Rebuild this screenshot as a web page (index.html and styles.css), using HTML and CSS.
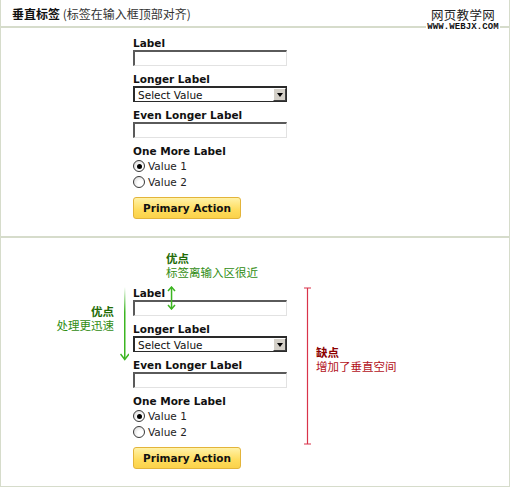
FILE: index.html
```html
<!DOCTYPE html>
<html lang="zh-CN">
<head>
  <meta charset="UTF-8">
  <title>垂直标签</title>
  <link rel="stylesheet" href="styles.css">
</head>
<body>

  <div class="panel">
    <div class="header">
      <strong>垂直标签</strong> (标签在输入框顶部对齐)
      <div class="watermark">
        <span class="wm-cn">网页教学网</span>
        <span class="wm-url">WWW.WEBJX.COM</span>
      </div>
    </div>

    <!-- plain form -->
    <div class="section first">
      <form class="form">
        <div class="field">
          <label class="caption">Label</label>
          <input type="text" class="text">
        </div>
        <div class="field">
          <label class="caption">Longer Label</label>
          <div class="select-wrap">
            <select><option>Select Value</option></select>
            <span class="select-arrow"></span>
          </div>
        </div>
        <div class="field">
          <label class="caption">Even Longer Label</label>
          <input type="text" class="text">
        </div>
        <div class="field">
          <span class="caption">One More Label</span>
          <label class="radio"><input type="radio" name="r1" checked> Value 1</label>
          <label class="radio"><input type="radio" name="r1"> Value 2</label>
        </div>
        <button type="button" class="btn">Primary Action</button>
      </form>
    </div>

    <!-- annotated form -->
    <div class="section second">
      <div class="note good top-note">
        <b>优点</b>
        <span>标签离输入区很近</span>
      </div>

      <div class="diagram">
        <div class="note good side-note">
          <b>优点</b>
          <span>处理更迅速</span>
        </div>

        <svg class="speed-arrow" width="9" height="74" viewBox="0 0 9 74">
          <defs>
            <linearGradient id="fade" x1="0" y1="0" x2="0" y2="1">
              <stop offset="0" stop-color="#3cb521" stop-opacity="0"/>
              <stop offset="0.35" stop-color="#3cb521"/>
              <stop offset="1" stop-color="#3cb521"/>
            </linearGradient>
          </defs>
          <rect x="4" y="0" width="1.5" height="72" fill="url(#fade)"/>
          <path d="M0.5 67 L4.75 72.5 L9 67" fill="none" stroke="#3cb521" stroke-width="1.5"/>
        </svg>

        <form class="form">
          <div class="field near">
            <label class="caption">Label</label>
            <input type="text" class="text">
            <svg class="near-arrow" width="9" height="24" viewBox="0 0 9 24">
              <rect x="3.8" y="1" width="1.5" height="22" fill="#3cb521"/>
              <path d="M1 5 L4.5 1 L8 5 M1 19 L4.5 23 L8 19" fill="none" stroke="#3cb521" stroke-width="1.5"/>
            </svg>
          </div>
          <div class="field">
            <label class="caption">Longer Label</label>
            <div class="select-wrap">
              <select><option>Select Value</option></select>
              <span class="select-arrow"></span>
            </div>
          </div>
          <div class="field">
            <label class="caption">Even Longer Label</label>
            <input type="text" class="text">
          </div>
          <div class="field">
            <span class="caption">One More Label</span>
            <label class="radio"><input type="radio" name="r2" checked> Value 1</label>
            <label class="radio"><input type="radio" name="r2"> Value 2</label>
          </div>
          <button type="button" class="btn">Primary Action</button>
        </form>

        <svg class="space-bracket" width="9" height="158" viewBox="0 0 9 158">
          <path d="M4.5 0.5 V157.5 M1 1 H8 M1 157 H8" fill="none" stroke="#d9334a" stroke-width="1.2"/>
        </svg>

        <div class="note bad">
          <b>缺点</b>
          <span>增加了垂直空间</span>
        </div>
      </div>
    </div>
  </div>

</body>
</html>
```

FILE: styles.css
```css
:root {
  --line: #d6dccb;
  --text: #1a1a1a;
  --green: #2f8c12;
  --green-dark: #216b05;
  --red: #b3121b;
  --red-dark: #8c0000;
}

* {
  box-sizing: border-box;
  margin: 0;
  padding: 0;
}

body {
  font-family: "DejaVu Sans", Verdana, sans-serif;
  font-size: 10px;
  color: var(--text);
  background: #fff;
  width: 510px;
  height: 487px;
}

.panel {
  width: 510px;
  height: 487px;
  border: 1px solid var(--line);
  border-top: none;
}

.header {
  position: relative;
  height: 28px;
  padding-left: 11px;
  border-bottom: 2px solid var(--line);
  font-family: "Noto Sans CJK SC", sans-serif;
  font-size: 12px;
  line-height: 28px;
  color: #333;
}

.header strong {
  color: #111;
}

.watermark {
  position: absolute;
  top: 7px;
  right: 9px;
  width: 74px;
  height: 25px;
  background: #fff;
  display: flex;
  flex-direction: column;
  align-items: center;
}

.wm-cn {
  font-family: "Noto Sans CJK SC", sans-serif;
  font-size: 12.5px;
  line-height: 16px;
  color: #222;
  letter-spacing: 0.3px;
}

.wm-url {
  font-family: "Liberation Mono", monospace;
  font-weight: bold;
  font-size: 9px;
  line-height: 9px;
  color: #111;
  letter-spacing: 0.1px;
}

.section {
  border-bottom: 2px solid var(--line);
}

.section.first {
  height: 210px;
  padding: 8px 0 0 132px;
}

.section.second {
  border-bottom: none;
  padding-top: 13px;
}

/* form */

.form {
  width: 154px;
}

.field {
  margin-bottom: 6px;
}

.caption {
  display: block;
  font-weight: bold;
  font-size: 10.5px;
  line-height: 14px;
  color: #111;
}

.text {
  display: block;
  width: 154px;
  height: 16px;
  border: 1px solid #e2e2e2;
  border-top: 2px solid #5a5a5a;
  border-left: 2px solid #5a5a5a;
  background: #fff;
  outline: none;
}

.select-wrap {
  position: relative;
  width: 154px;
  height: 16px;
}

.select-wrap select {
  -webkit-appearance: none;
  appearance: none;
  display: block;
  width: 100%;
  height: 16px;
  border: 1px solid #2a2a2a;
  border-top-width: 2px;
  border-left-width: 2px;
  background: #fff;
  font-family: "DejaVu Sans", Verdana, sans-serif;
  font-size: 10.5px;
  color: #111;
  padding-left: 3px;
  line-height: 12px;
  outline: none;
}

.select-arrow {
  position: absolute;
  top: 2px;
  right: 1px;
  width: 13px;
  height: 13px;
  background: #d4d0c8;
  border: 1px solid;
  border-color: #fff #404040 #404040 #fff;
}

.select-arrow::after {
  content: "";
  position: absolute;
  left: 2.5px;
  top: 4px;
  border-left: 3.5px solid transparent;
  border-right: 3.5px solid transparent;
  border-top: 4px solid #000;
}

.radio {
  display: flex;
  align-items: center;
  gap: 3px;
  font-weight: normal;
  font-size: 10.5px;
  line-height: 16px;
  color: #222;
}

.radio input {
  -webkit-appearance: none;
  appearance: none;
  width: 12px;
  height: 12px;
  border-radius: 50%;
  border: 1px solid #3a3a3a;
  background: radial-gradient(circle at 65% 65%, #fff 30%, #d0d0d0 100%);
  position: relative;
  margin: 0;
}

.radio input:checked::after {
  content: "";
  position: absolute;
  left: 2.5px;
  top: 2.5px;
  width: 5px;
  height: 5px;
  border-radius: 50%;
  background: #000;
}

.btn {
  display: block;
  margin-top: 7px;
  width: 108px;
  height: 22px;
  border: 1px solid #e3b43a;
  border-radius: 3px;
  background: linear-gradient(#fff2a8, #ffdc5c 60%, #fbd24a);
  font-family: "DejaVu Sans", Verdana, sans-serif;
  font-weight: bold;
  font-size: 10.5px;
  color: #111;
  cursor: pointer;
}

/* annotations */

.note {
  font-family: "Noto Sans CJK SC", sans-serif;
  font-size: 11.5px;
  line-height: 14px;
  display: flex;
  flex-direction: column;
}

.note.good b {
  color: var(--green-dark);
}

.note.good span {
  color: var(--green);
}

.top-note {
  padding-left: 165px;
  margin-bottom: 7px;
}

.diagram {
  display: flex;
  align-items: flex-start;
}

.side-note {
  width: 113px;
  align-items: flex-end;
  margin-top: 18px;
}

.speed-arrow {
  margin: 1px 4px 0 6px;
}

.near {
  position: relative;
}

.near-arrow {
  position: absolute;
  left: 34px;
  top: 0;
}

.space-bracket {
  margin: 1px 0 0 16px;
}

.note.bad {
  margin: 59px 0 0 4px;
}

.note.bad b {
  color: var(--red-dark);
}

.note.bad span {
  color: var(--red);
}
```
